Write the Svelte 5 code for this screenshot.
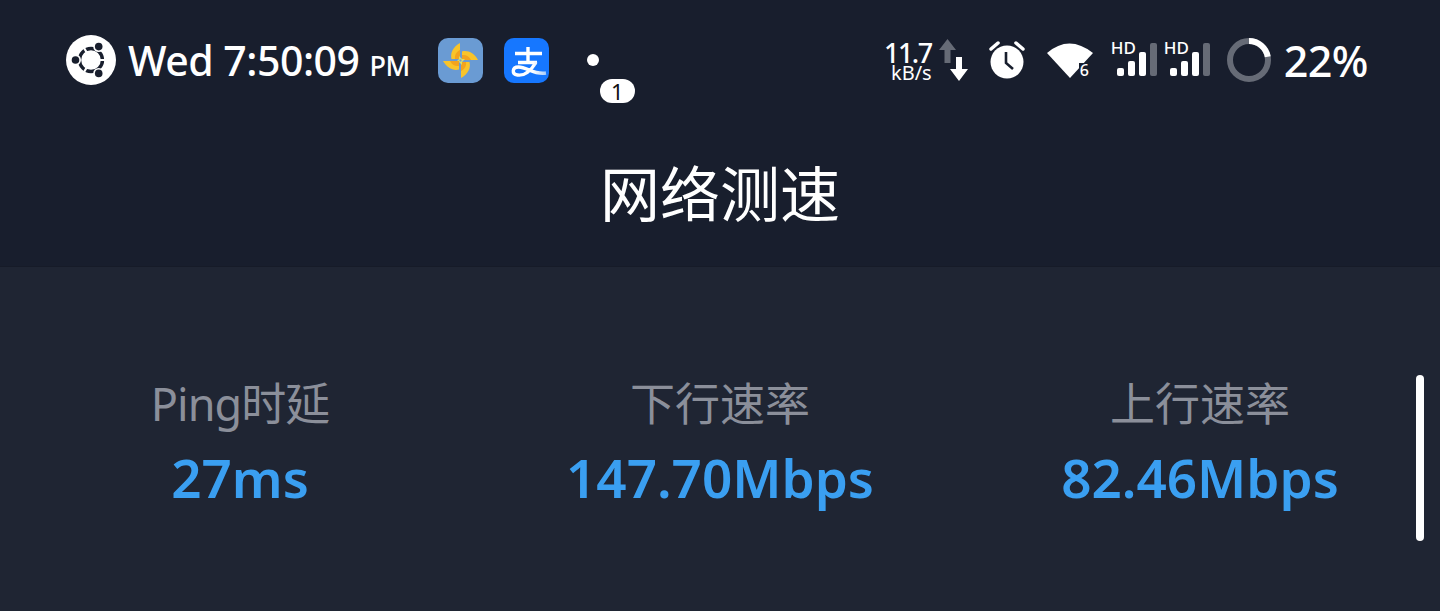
<script>
	const stats = [
		{ label: 'Ping时延', value: '27ms' },
		{ label: '下行速率', value: '147.70Mbps' },
		{ label: '上行速率', value: '82.46Mbps' }
	];
</script>

<div class="page">
	<header>
		<div class="status">
			<div class="left">
				<svg class="ubuntu" viewBox="0 0 50 50" width="50" height="50">
					<circle cx="25" cy="25" r="25" fill="#fff" />
					<circle cx="25" cy="25" r="11.500" fill="none" stroke="#181e2d" stroke-width="3.400" />
					<path d="M31 25h12M22 19.800L15 7.800M22 30.200l-7 12" stroke="#fff" stroke-width="2.200" />
					<circle cx="9.500" cy="25" r="5.500" fill="#fff" />
					<circle cx="32.700" cy="11.600" r="5.500" fill="#fff" />
					<circle cx="32.700" cy="38.400" r="5.500" fill="#fff" />
					<circle cx="9.500" cy="25" r="3.800" fill="#181e2d" />
					<circle cx="32.700" cy="11.600" r="3.800" fill="#181e2d" />
					<circle cx="32.700" cy="38.400" r="3.800" fill="#181e2d" />
				</svg>
				<span class="clock">Wed 7:50:09 <small>PM</small></span>
				<div class="apps">
					<svg class="app" viewBox="0 0 45 45" width="45" height="45">
						<rect width="45" height="45" rx="10" fill="#6a9bd3" />
						{#each [0, 90, 180, 270] as angle}
							<g transform="rotate({angle} 22.500 22.500)">
								<path d="M22 21V5C15 9 12 15 13.500 21z" fill="#f9c42a" />
								<path d="M22 21V12C18 14 16.500 17 17 21z" fill="#f2a31f" />
								<path d="M18 24l3-3 1 3z" fill="#d8dc6a" />
							</g>
						{/each}
					</svg>
					<svg class="app" viewBox="0 0 45 45" width="45" height="45">
						<defs>
							<linearGradient id="swoosh" x1="0" x2="1" y1="0" y2="0">
								<stop offset="0.6" stop-color="#fff" />
								<stop offset="1" stop-color="#a9cdfb" />
							</linearGradient>
						</defs>
						<rect width="45" height="45" rx="10" fill="#1677ff" />
						<path d="M11 15.500h27M24 9v16M14 24.500h19" fill="none" stroke="#fff" stroke-width="3.400" />
						<path d="M32 24C27 33 20 38 13.500 37 7.500 36 8 29 14.500 29 23 29 30 37 42 35" fill="none" stroke="url(#swoosh)" stroke-width="3.400" />
					</svg>
					<div class="dot">
						<span class="badge">1</span>
					</div>
				</div>
			</div>
			<div class="right">
				<div class="speed">
					<div class="rate"><b>11.7</b><i>kB/s</i></div>
					<svg viewBox="0 0 30 44" width="30" height="44">
						<path d="M1 12L9.500 1 18 12h-5.500v13h-6V12z" fill="#666b76" />
						<path d="M12 31h6V19h6v12h6l-9 12z" fill="#fff" />
					</svg>
				</div>
				<svg class="alarm" viewBox="0 0 38 38" width="38" height="38">
					<path d="M3 8l7-6M35 8l-7-6" stroke="#fff" stroke-width="3.500" stroke-linecap="round" />
					<circle cx="19" cy="21" r="16.500" fill="#fff" />
					<path d="M18 11v11l7 6" fill="none" stroke="#181e2d" stroke-width="2.600" />
				</svg>
				<div class="wifi">
					<svg viewBox="0 0 46 38" width="46" height="38">
						<path d="M0 12Q22-7 46 12L23 37z" fill="#fff" />
					</svg>
					<span>6</span>
				</div>
				<div class="signals">
					{#each [0, 1] as sim}
						<div class="signal">
							<span>HD</span>
							<div class="bars">
								<i style="height: 8px"></i>
								<i style="height: 15px"></i>
								<i style="height: 24px"></i>
								<i class="off" style="height: 33px"></i>
							</div>
						</div>
					{/each}
				</div>
				<svg class="ring" viewBox="0 0 44 44" width="44" height="44">
					<circle cx="22" cy="22" r="19" fill="none" stroke="#666b76" stroke-width="6" />
					<circle cx="22" cy="22" r="19" fill="none" stroke="#fff" stroke-width="6" stroke-dasharray="26.300 120" transform="rotate(-90 22 22)" />
				</svg>
				<span class="battery">22%</span>
			</div>
		</div>
		<h1>网络测速</h1>
	</header>
	<main>
		{#each stats as stat}
			<div class="stat">
				<div class="label">{stat.label}</div>
				<div class="value">{stat.value}</div>
			</div>
		{/each}
		<div class="scrollbar"></div>
	</main>
</div>

<style>
	:global(body) {
		margin: 0;
		background: #1f2533;
	}
	.page {
		height: 611px;
		overflow: hidden;
		color: #fff;
		font-family: 'Noto Sans', 'Noto Sans CJK SC', sans-serif;
		display: flex;
		flex-direction: column;
	}
	header {
		height: 267px;
		box-sizing: border-box;
		background: #181e2d;
		border-bottom: 1px solid #161b28;
		padding: 35px 72px 0 66px;
	}
	.status {
		display: flex;
		justify-content: space-between;
		align-items: center;
		height: 50px;
	}
	.left,
	.right,
	.apps {
		display: flex;
		align-items: center;
	}
	.clock {
		margin-left: 12px;
		font-size: 41px;
		font-weight: 500;
		letter-spacing: -0.5px;
		white-space: nowrap;
	}
	.clock small {
		font-size: 27px;
	}
	.apps {
		margin-left: 28px;
		gap: 21px;
	}
	.app {
		display: block;
	}
	.dot {
		position: relative;
		width: 12px;
		height: 12px;
		margin-left: 17px;
		border-radius: 50%;
		background: #fff;
	}
	.badge {
		position: absolute;
		left: 13px;
		top: 25px;
		width: 35px;
		height: 24px;
		border-radius: 12px;
		background: #fff;
		color: #111;
		font-size: 22px;
		line-height: 24px;
		text-align: center;
	}
	.speed {
		display: flex;
		align-items: center;
		gap: 6px;
	}
	.rate {
		display: flex;
		flex-direction: column;
		align-items: flex-end;
		line-height: 1;
	}
	.rate b {
		font-size: 27px;
		font-weight: 500;
		letter-spacing: -1.5px;
		line-height: 25px;
	}
	.rate i {
		font-size: 20px;
		font-style: normal;
		line-height: 16px;
	}
	.alarm {
		margin-left: 20px;
	}
	.wifi {
		position: relative;
		margin-left: 21px;
		width: 46px;
		height: 38px;
	}
	.wifi span {
		position: absolute;
		left: 32px;
		top: 22px;
		padding-left: 1px;
		background: #181e2d;
		font-size: 16px;
		font-weight: 500;
		line-height: 15px;
	}
	.signals {
		display: flex;
		gap: 8px;
		margin-left: 18px;
	}
	.signal {
		position: relative;
		width: 45px;
		height: 42px;
	}
	.signal span {
		position: absolute;
		left: 0;
		top: -1px;
		font-size: 17px;
		font-weight: 500;
		line-height: 20px;
	}
	.bars {
		position: absolute;
		left: 6px;
		bottom: 5px;
		display: flex;
		align-items: flex-end;
		gap: 4px;
	}
	.bars i {
		display: block;
		width: 7px;
		border-radius: 2px;
		background: #fff;
	}
	.bars i.off {
		background: #666b76;
	}
	.ring {
		margin-left: 18px;
	}
	.battery {
		margin-left: 13px;
		font-size: 43px;
		font-weight: 500;
		letter-spacing: -0.5px;
	}
	h1 {
		margin: 77px 0 0 -66px;
		width: 1440px;
		text-align: center;
		font-size: 60px;
		font-weight: 400;
		line-height: 64px;
	}
	main {
		position: relative;
		flex: 1;
		display: grid;
		grid-template-columns: repeat(3, 1fr);
		padding-top: 109px;
		align-content: start;
	}
	.stat {
		text-align: center;
	}
	.stat:first-child .label {
		letter-spacing: -1px;
	}
	.label {
		color: #8b8f9a;
		font-size: 45px;
		line-height: 56px;
	}
	.value {
		color: #3a9ff1;
		font-size: 53px;
		font-weight: 600;
		line-height: 76px;
		margin-top: 8px;
	}
	.scrollbar {
		position: absolute;
		left: 1416px;
		top: 108px;
		width: 8px;
		height: 166px;
		border-radius: 4px;
		background: #fff;
	}
</style>
